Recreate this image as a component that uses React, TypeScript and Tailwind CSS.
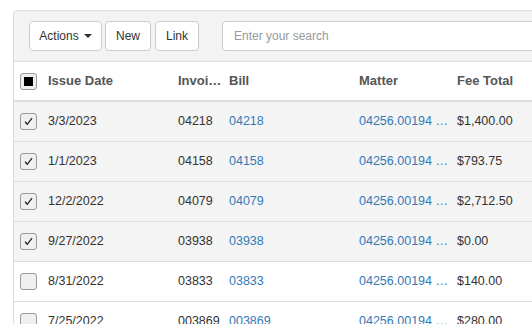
import React from 'react';

type Row = {
  date: string;
  invoice: string;
  bill: string;
  matter: string;
  fee: string;
  checked: boolean;
};

const rows: Row[] = [
  { date: '3/3/2023', invoice: '04218', bill: '04218', matter: '04256.00194 - Smith v. Jones', fee: '$1,400.00', checked: true },
  { date: '1/1/2023', invoice: '04158', bill: '04158', matter: '04256.00194 - Smith v. Jones', fee: '$793.75', checked: true },
  { date: '12/2/2022', invoice: '04079', bill: '04079', matter: '04256.00194 - Smith v. Jones', fee: '$2,712.50', checked: true },
  { date: '9/27/2022', invoice: '03938', bill: '03938', matter: '04256.00194 - Smith v. Jones', fee: '$0.00', checked: true },
  { date: '8/31/2022', invoice: '03833', bill: '03833', matter: '04256.00194 - Smith v. Jones', fee: '$140.00', checked: false },
  { date: '7/25/2022', invoice: '003869', bill: '003869', matter: '04256.00194 - Smith v. Jones', fee: '$280.00', checked: false },
];

function Checkbox({ state }: { state: 'checked' | 'empty' | 'partial' }) {
  return (
    <div className="w-[17px] h-[17px] rounded-[3px] border border-[#9a9a9a] bg-[#efefef] flex items-center justify-center">
      {state === 'partial' && <div className="w-[9px] h-[9px] bg-black" />}
      {state === 'checked' && (
        <svg width="11" height="11" viewBox="0 0 11 11">
          <path d="M2 5.8 L4.3 8.3 L9 2.2" fill="none" stroke="#222" strokeWidth="1.3" />
        </svg>
      )}
    </div>
  );
}

export default function App() {
  return (
    <div className="w-[532px] h-[324px] overflow-hidden bg-white pt-[10px] pl-[13px] font-['Liberation_Sans',Arial,sans-serif]">
      <div className="w-[560px] border border-[#dddddd] rounded-[4px]">
        {/* toolbar */}
        <div className="h-[51px] bg-[#f3f3f3] border-b border-[#dddddd] flex items-center pl-[15px] pb-px rounded-t-[4px]">
          <button className="w-[73px] h-[30px] bg-white border border-[#cccccc] rounded-[4px] text-[12px] text-[#333] flex items-center justify-center gap-[5px]">
            Actions
            <span className="w-0 h-0 border-x-[4px] border-x-transparent border-t-[4px] border-t-[#333]" />
          </button>
          <button className="ml-[3px] w-[46px] h-[30px] bg-white border border-[#cccccc] rounded-[4px] text-[12px] text-[#333]">
            New
          </button>
          <button className="ml-[4px] w-[44px] h-[30px] bg-white border border-[#cccccc] rounded-[4px] text-[12px] text-[#333]">
            Link
          </button>
          <input
            className="ml-[23px] w-[330px] h-[30px] bg-white border border-[#cccccc] rounded-[4px] px-[11px] text-[12px] text-[#333] placeholder:text-[#999] outline-none"
            placeholder="Enter your search"
          />
        </div>

        {/* header */}
        <div className="h-[40px] bg-white border-b-2 border-[#dddddd] flex items-center text-[13px] font-bold text-[#555]">
          <div className="w-[34px] pl-[6px]">
            <Checkbox state="partial" />
          </div>
          <div className="w-[130px]">Issue Date</div>
          <div className="w-[51px] pr-[5px] truncate">Invoice Number</div>
          <div className="w-[130px]">Bill</div>
          <div className="w-[98px]">Matter</div>
          <div className="w-[110px]">Fee Total</div>
        </div>

        {/* rows */}
        {rows.map((r, i) => (
          <div
            key={i}
            className={`h-[40px] border-b border-[#dddddd] flex items-center text-[12.5px] text-[#333] ${r.checked ? 'bg-[#f4f4f4]' : 'bg-white'}`}
          >
            <div className="w-[34px] pl-[6px]">
              <Checkbox state={r.checked ? 'checked' : 'empty'} />
            </div>
            <div className="w-[130px]">{r.date}</div>
            <div className="w-[51px] pr-[5px] truncate">{r.invoice}</div>
            <div className="w-[130px] text-[#337ab7]">{r.bill}</div>
            <div className="w-[98px] pr-[6px] truncate text-[#337ab7]">{r.matter}</div>
            <div className="w-[110px]">{r.fee}</div>
          </div>
        ))}
      </div>
    </div>
  );
}
